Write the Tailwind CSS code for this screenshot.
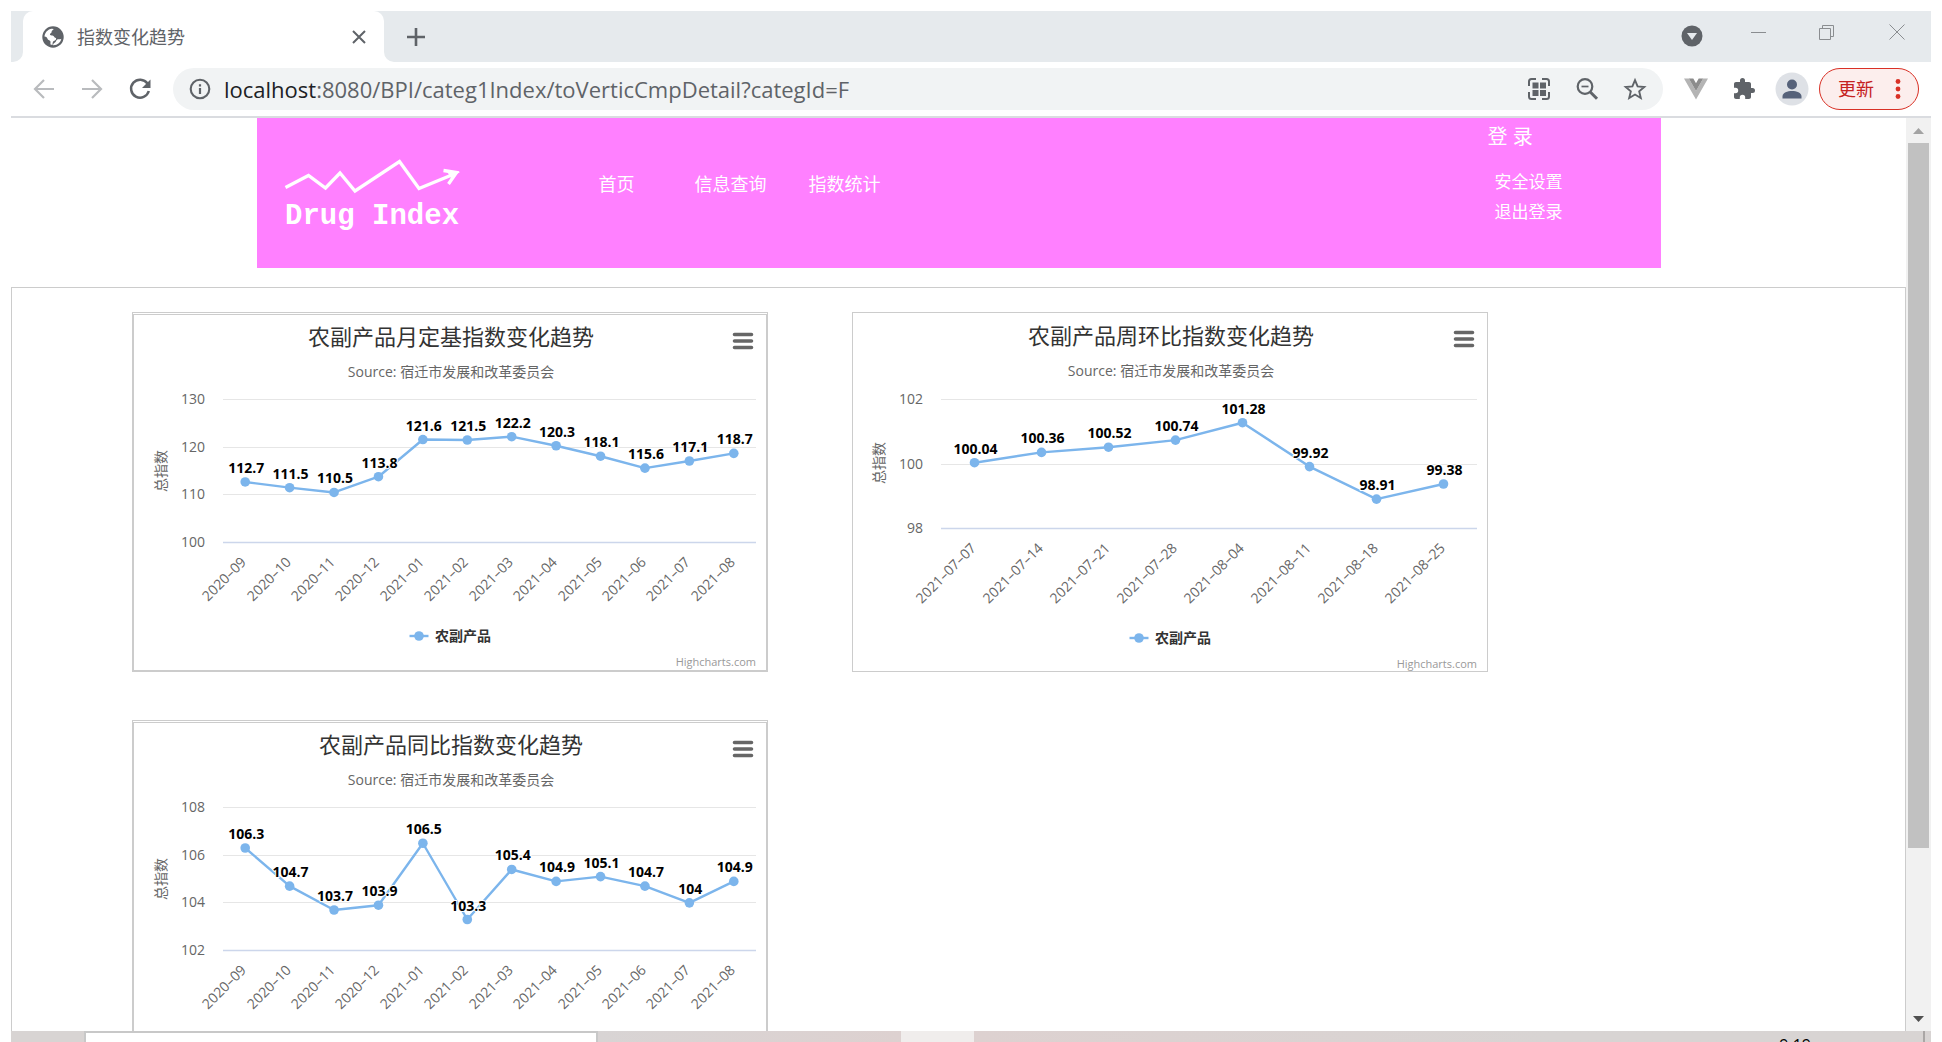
<!DOCTYPE html>
<html lang="zh-CN">
<head>
<meta charset="utf-8">
<title>指数变化趋势</title>
<script src="https://cdn.jsdelivr.net/npm/@tailwindcss/browser@4"></script>
</head>
<body class="flex h-screen flex-col overflow-hidden bg-white px-[11px] pt-[11px] font-['Open_Sans','Noto_Sans_CJK_SC',sans-serif]">

<!-- Tab strip -->
<header class="flex h-[51px] shrink-0 bg-[#e6eaed] pl-3">
  <div class="relative flex w-[361px] items-center rounded-t-[10px] bg-white pl-[19px] pr-[15px]">
    <svg class="absolute bottom-0 -left-[10px] size-[10px]" viewBox="0 0 10 10"><path d="M10 0v10H0A10 10 0 0 0 10 0z" fill="#fff"/></svg>
    <svg class="absolute bottom-0 -right-[10px] size-[10px]" viewBox="0 0 10 10"><path d="M0 0v10h10A10 10 0 0 1 0 0z" fill="#fff"/></svg>
    <svg class="size-[22px]" viewBox="0 0 22 22">
      <circle cx="11" cy="11" r="10.7" fill="#5f6368"/>
      <path d="M2.500 10.500C2.800 6.500 5.800 3.200 9.800 2.700L11.800 3C10.800 4.200 9.500 4.600 9.600 6c.1 1.200-1.800 1.300-1.700 2.600.1 1.100 1.600.8 2.600 1 1.700.3 1.400 1.800 2.700 2.100 1.300.3 1.200 1.500.3 2.300-.9.800-2.200.9-2.600 2-.3 1-.5 1.800-.2 3l-2.200-.4c-.3-1.500.4-2.400-.3-3.600-.7-1.200-2.200-.6-2.600-2-.4-1.300-1.200-2.500-3.100-2.500z" fill="#fff"/>
      <path d="M11 19.200c.2-1.600 1-2.200 2-2.800 1.300-.7.9-2.300 2.200-3 1.200-.6 2.700.2 4.100-.7-.6 3.600-3.700 6.700-8.300 6.500z" fill="#fff"/>
    </svg>
    <span class="ml-[13px] flex-1 text-lg text-[#5f6368]">指数变化趋势</span>
    <button aria-label="关闭标签页" class="size-5"><svg class="size-5" viewBox="0 0 20 20" fill="none" stroke="#5f6368" stroke-width="2"><path d="M4 4l12 12M16 4L4 16"/></svg></button>
  </div>
  <button aria-label="新标签页" class="ml-[20px] w-6"><svg class="size-6" viewBox="0 0 24 24" fill="none" stroke="#5f6368" stroke-width="2.600"><path d="M3 12h18M12 3v18"/></svg></button>
  <div class="flex flex-1 items-start justify-end pt-2 pr-[13px]">
    <button aria-label="搜索标签页" class="mt-[5px] mr-[30px]"><svg class="size-6" viewBox="0 0 24 24"><circle cx="12" cy="12" r="10.500" fill="#5f6368"/><path d="M7 9h10l-5 7z" fill="#e6eaed"/></svg></button>
    <button aria-label="最小化" class="w-[68px] pl-[12px]"><svg class="size-[26px]" viewBox="0 0 26 26" fill="none" stroke="#8a8d90"><path d="M5 13.500h15"/></svg></button>
    <button aria-label="还原" class="w-[68px] pl-[12px]"><svg class="size-[26px]" viewBox="0 0 26 26" fill="none" stroke="#8a8d90"><path d="M5.500 9.500h11v11h-11zM8.500 9.500v-3h11v11h-3"/></svg></button>
    <button aria-label="关闭" class="w-[48px] pl-[14px]"><svg class="size-[26px]" viewBox="0 0 26 26" fill="none" stroke="#8a8d90"><path d="M5.500 5.500l15 15M20.500 5.500l-15 15"/></svg></button>
  </div>
</header>

<!-- Toolbar -->
<nav class="flex h-[56px] shrink-0 items-center border-b-2 border-[#dadce0] bg-white pr-3 pl-[9px]">
  <button aria-label="后退" class="flex w-12 justify-center"><svg class="size-6" viewBox="0 0 24 24" fill="none" stroke="#b9bbbe" stroke-width="2.200"><path d="M22 12H3.500M12 3L3 12l9 9"/></svg></button>
  <button aria-label="前进" class="flex w-12 justify-center"><svg class="size-6" viewBox="0 0 24 24" fill="none" stroke="#b9bbbe" stroke-width="2.200"><path d="M2 12h18.500M12 3l9 9-9 9"/></svg></button>
  <button aria-label="重新加载" class="flex w-12 justify-center"><svg class="size-6" viewBox="0 0 24 24"><path d="M19.500 6.500A9 9 0 1 0 20.800 14" fill="none" stroke="#5f6368" stroke-width="2.500"/><path d="M22.500 2.500v8.500H14z" fill="#5f6368"/></svg></button>
  <div class="ml-[9px] flex h-[42px] min-w-0 flex-1 items-center rounded-full bg-[#f1f3f4] pr-1 pl-[15px]">
    <svg class="size-6 shrink-0" viewBox="0 0 24 24"><circle cx="12" cy="12" r="9.300" fill="none" stroke="#5f6368" stroke-width="2.100"/><path d="M10.900 11h2.200v6h-2.200zM10.900 7.200h2.200v2.200h-2.200z" fill="#5f6368"/></svg>
    <div role="textbox" aria-label="地址" class="ml-3 min-w-0 flex-1 truncate pb-px text-[22px] leading-[30px] text-[#5f6368]"><span class="text-[#202124]">localhost</span>:8080/BPI/categ1Index/toVerticCmpDetail?categId=F</div>
    <button aria-label="二维码" class="flex w-12 justify-center"><svg class="size-6" viewBox="0 0 24 24" fill="none" stroke="#5f6368" stroke-width="2"><path d="M2 9V4.500Q2 2 4.500 2H9M15 2h4.500Q22 2 22 4.500V9M22 15v4.500q0 2.500-2.500 2.500H15M9 22H4.500Q2 22 2 19.500V15"/><path d="M5.500 5.500h6v6h-6zM13 5.500h6v6h-6zM5.500 13h6v6h-6zM13 13h6v6h-6z" fill="#5f6368" stroke="none"/></svg></button>
    <button aria-label="缩放" class="flex w-12 justify-center"><svg class="size-6" viewBox="0 0 24 24" fill="none" stroke="#5f6368" stroke-width="2.200"><circle cx="10" cy="9.500" r="7.300"/><path d="M6.500 9.500h7" stroke-width="1.700"/><path d="M15 14.700l7 7" stroke-width="3"/></svg></button>
    <button aria-label="收藏" class="flex w-12 justify-center"><svg class="size-6" viewBox="0 0 24 24" fill="none" stroke="#5f6368" stroke-width="1.900"><path d="M12 3.200l2.600 6.200 6.700.6-5.100 4.400 1.600 6.600L12 17.500 6.200 21l1.600-6.600L2.700 10l6.700-.6z"/></svg></button>
  </div>
  <button aria-label="Vue 扩展" class="ml-[9px] flex w-12 justify-center"><svg class="size-6" viewBox="0 0 24 24"><path d="M0 1.500h4.800L12 14l7.200-12.500H24l-12 21z" fill="#b4b4b4"/><path d="M4.800 1.500h4.500L12 6.200l2.700-4.700h4.500L12 14z" fill="#8c8c8c"/></svg></button>
  <button aria-label="扩展程序" class="flex w-12 justify-center"><svg class="size-6" viewBox="0 0 24 24"><path d="M20.500 11H19V7c0-1.100-.9-2-2-2h-4V3.500a2.500 2.500 0 0 0-5 0V5H4c-1.100 0-2 .9-2 2v3.800h1.500a2.700 2.700 0 0 1 0 5.400H2V20c0 1.100.9 2 2 2h3.800v-1.500a2.700 2.700 0 0 1 5.400 0V22H17c1.100 0 2-.9 2-2v-4h1.500a2.500 2.500 0 0 0 0-5z" fill="#5f6368"/></svg></button>
  <button aria-label="个人资料" class="flex w-12 justify-center"><svg class="size-[34px]" viewBox="0 0 34 34"><circle cx="17" cy="17" r="16.500" fill="#dee1e6"/><circle cx="17" cy="12.500" r="5" fill="#56627a"/><path d="M7.500 26.500v-2c0-4 5-5.500 9.500-5.500s9.500 1.500 9.500 5.500v2z" fill="#56627a"/></svg></button>
  <button class="ml-[3px] flex h-[42px] w-[100px] items-center rounded-full border border-[#d93025] bg-[#fceeed] pl-[18px] text-lg text-[#c5221f]">更新<svg class="ml-[19px] h-6 w-[10px]" viewBox="0 0 10 24" fill="#d93025"><circle cx="5" cy="4.500" r="2.400"/><circle cx="5" cy="12" r="2.400"/><circle cx="5" cy="19.500" r="2.400"/></svg></button>
</nav>

<!-- Page viewport -->
<div class="flex min-h-0 flex-1">
  <div class="flex min-w-0 flex-1 flex-col">
    <div class="mx-auto flex h-[150px] w-[1404px] max-w-full shrink-0 bg-[#ff80ff] text-white">
      <a href="#" class="mt-[38px] ml-[24px] h-[82px] w-[200px]">
        <svg class="h-[82px] w-[200px]" viewBox="0 0 200 82" fill="none" stroke="#fff" stroke-width="3.300">
          <path d="M4.500 31.500L27.500 19.500 44.500 32 59 17 74 35 118.500 5.500 138 32.500 172 18.500"/>
          <path d="M162.500 14.500L175.500 16.500 167.500 28" />
          <path d="M165 14l14 2-9 6z" fill="#fff" stroke="none"/>
          <text x="4" y="68" fill="#fff" stroke="none" font-size="29" font-weight="700" font-family="'Courier New','Liberation Mono',monospace">Drug Index</text>
        </svg>
      </a>
      <nav class="mt-[51px] ml-[118px] flex text-lg leading-[30px]">
        <a href="#" class="mr-[60px]">首页</a>
        <a href="#" class="mr-[42px]">信息查询</a>
        <a href="#">指数统计</a>
      </nav>
      <div class="mr-[98px] ml-auto flex flex-col">
        <a href="#" class="mt-1 mb-[15px] -ml-[7px] text-xl leading-[30px]">登 录</a>
        <a href="#" class="text-[17px] leading-[30px]">安全设置</a>
        <a href="#" class="text-[17px] leading-[30px]">退出登录</a>
      </div>
    </div>

    <main class="mt-[19px] flex min-h-0 flex-1 flex-wrap content-start gap-x-[84px] gap-y-12 overflow-hidden border border-b-0 border-[#ccc] pt-6 pl-[120px]" id="charts"></main>
  </div>

  <!-- Scrollbar -->
  <div class="flex w-[25px] shrink-0 flex-col items-center bg-[#f1f1f1]">
    <svg class="h-[25px] w-[11px]" viewBox="0 0 11 25"><path d="M0 16h11L5.500 10z" fill="#a3a3a3"/></svg>
    <div class="h-[705px] w-[21px] bg-[#c1c1c1]"></div>
    <svg class="mt-auto h-[25px] w-[11px]" viewBox="0 0 11 25"><path d="M0 10h11L5.500 16z" fill="#505050"/></svg>
  </div>
</div>

<!-- Taskbar -->
<footer class="flex h-[11px] shrink-0 overflow-hidden bg-[#d8d4d3]">
  <div class="ml-[73px] w-[514px] border-x-2 border-t-2 border-[#c8c8c8] bg-white"></div>
  <div class="w-[303px] bg-linear-to-r from-[#d8d4d4] to-[#ddd1d0]"></div>
  <div class="w-[73px] bg-[#f0edec]"></div>
  <div class="flex flex-1 justify-end bg-linear-to-r from-[#ddd1d0] to-[#d8d4d3] to-60%">
    <time class="mt-[2px] mr-[112px] text-base leading-6 text-black">9:19</time>
    <div class="mr-[6px] w-[2px] bg-[#aaa6a5]"></div>
  </div>
</footer>

<script>
const months = ['2020-09','2020-10','2020-11','2020-12','2021-01','2021-02','2021-03','2021-04','2021-05','2021-06','2021-07','2021-08'];
const charts = [
  { title: '农副产品月定基指数变化趋势', nested: true, cats: months, x0: 91, x1: 624, ticks: [100,110,120,130],
    top: 87, bottom: 230, head: 0, axisY: 159, legendY: 324, creditY: 354,
    data: [112.7,111.5,110.5,113.8,121.6,121.5,122.2,120.3,118.1,115.6,117.1,118.7] },
  { title: '农副产品周环比指数变化趋势', nested: false, x0: 89, x1: 625, ticks: [98,100,102],
    cats: ['2021-07-07','2021-07-14','2021-07-21','2021-07-28','2021-08-04','2021-08-11','2021-08-18','2021-08-25'],
    top: 87, bottom: 216, head: -1, axisY: 151, legendY: 326, creditY: 356,
    data: [100.04,100.36,100.52,100.74,101.28,99.92,98.91,99.38] },
  { title: '农副产品同比指数变化趋势', nested: true, cats: months, x0: 91, x1: 624, ticks: [102,104,106,108],
    top: 87, bottom: 230, head: 0, axisY: 159, legendY: 324, creditY: 354,
    data: [106.3,104.7,103.7,103.9,106.5,103.3,105.4,104.9,105.1,104.7,104,104.9] }
];

function draw(c) {
  const lo = c.ticks[0], hi = c.ticks[c.ticks.length - 1];
  const y = v => c.bottom + 0.5 - (v - lo) / (hi - lo) * (c.bottom - c.top);
  const step = (c.x1 - c.x0) / c.data.length;
  const x = i => c.x0 + step * (i + 0.5);
  const pts = c.data.map((v, i) => [x(i), y(v)]);
  const grid = c.ticks.map((t, i) => {
    const gy = Math.floor(y(t));
    return `<path d="M${c.x0} ${gy + 0.5}H${c.x1}" stroke="${i ? '#e6e6e6' : '#ccd6eb'}" stroke-width="${i ? 1 : 1.3}"/>
      <text x="${c.x0 - 18}" y="${gy + 5}" text-anchor="end" font-size="14" fill="#666">${t}</text>`;
  }).join('');
  const cats = c.cats.map((t, i) => {
    const cx = Math.round(x(i)) + 2, cy = c.bottom + 21;
    return `<text x="${cx}" y="${cy}" transform="rotate(-45 ${cx} ${cy})" text-anchor="end" font-size="14" fill="#666">${t.replace(/-/g, '–')}</text>`;
  }).join('');
  const dots = pts.map(p => `<circle cx="${p[0]}" cy="${p[1]}" r="4.8" fill="#7cb5ec"/>`).join('');
  const labels = pts.map((p, i) => `<text x="${p[0] + 1}" y="${p[1] - 9}" text-anchor="middle" font-size="14" font-weight="700" fill="#000" stroke="#fff" stroke-width="2" paint-order="stroke">${c.data[i]}</text>`).join('');
  const h = c.head, a = c.x0 - 62, l = c.legendY;
  const box = c.nested ? '2 3 632 355' : '1 1 634 358';
  const svg = `<svg class="block size-full" viewBox="${box}" role="img" aria-label="${c.title}">
    <text x="319" y="${33 + h}" text-anchor="middle" font-size="22" fill="#333">${c.title}</text>
    <text x="319" y="${65 + h}" text-anchor="middle" font-size="14" fill="#666">Source: 宿迁市发展和改革委员会</text>
    <text x="${a + 5}" y="${c.axisY}" transform="rotate(-90 ${a + 5} ${c.axisY})" text-anchor="middle" font-size="14" fill="#666">总指数</text>
    ${grid}${cats}
    <polyline points="${pts.map(p => p.join()).join(' ')}" fill="none" stroke="#7cb5ec" stroke-width="2.4" stroke-linejoin="round"/>
    ${dots}${labels}
    <path d="M277.500 ${l}h19" stroke="#7cb5ec" stroke-width="2.4"/><circle cx="287" cy="${l}" r="4.8" fill="#7cb5ec"/>
    <text x="303" y="${l + 5}" font-size="14" font-weight="700" fill="#333">农副产品</text>
    <text x="${c.x1}" y="${c.creditY}" text-anchor="end" font-size="11" fill="#999">Highcharts.com</text>
  </svg>`;
  const menu = `<button aria-label="图表菜单" class="absolute top-3 right-[9px] flex size-7 items-center justify-center"><svg class="size-6" viewBox="0 0 24 24" stroke="#666" stroke-width="3.600" stroke-linecap="round"><path d="M3.500 5.500h17M3.500 12h17M3.500 18.500h17"/></svg></button>`;
  return c.nested
    ? `<section class="h-[360px] w-[636px] border border-[#ccc] pt-px"><div class="relative h-full border border-[#ccc]">${svg}${menu}</div></section>`
    : `<section class="relative h-[360px] w-[636px] border border-[#ccc]">${svg}${menu}</section>`;
}
document.getElementById('charts').innerHTML = charts.map(draw).join('');
</script>
</body>
</html>
